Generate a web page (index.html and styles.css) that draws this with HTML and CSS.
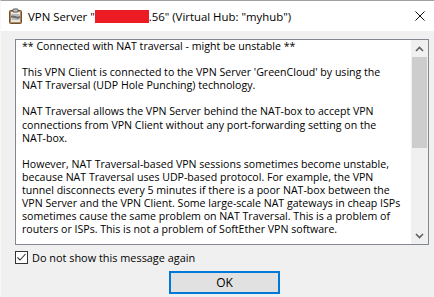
FILE: index.html
```html
<!DOCTYPE html>
<html>
<head>
<meta charset="utf-8">
<link rel="stylesheet" href="styles.css">
</head>
<body>
<div class="window">
  <div class="titlebar">
    <svg class="app-icon" width="16" height="16" viewBox="0 0 16 16">
      <rect x="1.5" y="2.5" width="12" height="13" rx="1" fill="#b08850" stroke="#6e5030"/>
      <rect x="3" y="4" width="9" height="10" fill="#e8e8e8"/>
      <path d="M3.5 7 L11.5 7 M3.5 9 L11.5 9 M3.5 11 L11.5 11" stroke="#8a8a8a" stroke-width="1"/>
      <path d="M3 8 C6 6.5 8 10 12 8 L12 10 C8 12 6 8.5 3 10 Z" fill="#6a6a6a"/>
      <rect x="5" y="1" width="5" height="3" rx="0.5" fill="#c8c8c8" stroke="#555"/>
    </svg>
    <span class="title">VPN Server "<span class="redact"></span>.56" (Virtual Hub: "myhub")</span>
    <svg class="close" width="10" height="10" viewBox="0 0 10 10">
      <path d="M0.5 0.5 L9.5 9.5 M9.5 0.5 L0.5 9.5" stroke="#111" stroke-width="1"/>
    </svg>
  </div>
  <div class="content">
    <div class="textbox">
      <div class="text">
        <p>** Connected with NAT traversal - might be unstable **</p>
        <p>This VPN Client is connected to the VPN Server 'GreenCloud' by using the<br>NAT Traversal (UDP Hole Punching) technology.</p>
        <p>NAT Traversal allows the VPN Server behind the NAT-box to accept VPN<br>connections from VPN Client without any port-forwarding setting on the<br>NAT-box.</p>
        <p>However, NAT Traversal-based VPN sessions sometimes become unstable,<br>because NAT Traversal uses UDP-based protocol. For example, the VPN<br>tunnel disconnects every 5 minutes if there is a poor NAT-box between the<br>VPN Server and the VPN Client. Some large-scale NAT gateways in cheap ISPs<br>sometimes cause the same problem on NAT Traversal. This is a problem of<br>routers or ISPs. This is not a problem of SoftEther VPN software.</p>
      </div>
      <div class="scrollbar">
        <div class="arrow">
          <svg width="9" height="6" viewBox="0 0 9 6"><path d="M1 5 L4.5 1.5 L8 5" fill="none" stroke="#606060" stroke-width="1.6"/></svg>
        </div>
        <div class="track">
          <div class="thumb"></div>
        </div>
        <div class="arrow">
          <svg width="9" height="6" viewBox="0 0 9 6"><path d="M1 1 L4.5 4.5 L8 1" fill="none" stroke="#606060" stroke-width="1.6"/></svg>
        </div>
      </div>
    </div>
    <label class="check-row">
      <span class="checkbox">
        <svg width="11" height="11" viewBox="0 0 11 11"><path d="M1.5 5.5 L4 8 L9.5 2" fill="none" stroke="#333" stroke-width="1.1"/></svg>
      </span>
      <span class="check-label">Do not show this message again</span>
    </label>
    <div class="button-row">
      <button class="ok">OK</button>
    </div>
  </div>
</div>
</body>
</html>
```
FILE: styles.css
```css
html, body {
  margin: 0;
  padding: 0;
}
body {
  width: 434px;
  height: 297px;
  overflow: hidden;
  font-family: "Open Sans", "Noto Sans", sans-serif;
}
.window {
  width: 434px;
  height: 297px;
  box-sizing: border-box;
  background: #f0f0f0;
  border-top: 1px solid #a0a0a0;
  border-left: 1px solid #f8f8f8;
  display: flex;
  flex-direction: column;
}
.titlebar {
  height: 30px;
  background: #ffffff;
  display: flex;
  align-items: center;
  padding-left: 7px;
  padding-right: 8px;
  flex-shrink: 0;
}
.app-icon {
  flex-shrink: 0;
}
.title {
  margin-left: 4px;
  font-size: 11.4px;
  color: #000;
  flex: 1;
  white-space: nowrap;
  display: flex;
  align-items: center;
}
.redact {
  display: inline-block;
  width: 54px;
  height: 13px;
  background: #ed1c24;
}
.close {
  flex-shrink: 0;
  margin-right: 1px;
}
.content {
  padding: 8px 4px 0 14px;
  display: flex;
  flex-direction: column;
}
.textbox {
  width: 414px;
  height: 206px;
  box-sizing: border-box;
  border: 1px solid #828790;
  background: #ffffff;
  display: flex;
}
.text {
  flex: 1;
  padding: 0 0 0 6px;
  font-size: 10.6px;
  line-height: 13.1px;
  color: #000;
  white-space: nowrap;
  overflow: hidden;
}
.text p {
  margin: 0 0 13.1px 0;
}
.scrollbar {
  width: 17px;
  background: #f0f0f0;
  display: flex;
  flex-direction: column;
}
.arrow {
  height: 17px;
  display: flex;
  align-items: center;
  justify-content: center;
}
.track {
  flex: 1;
  display: flex;
  flex-direction: column;
}
.thumb {
  height: 91px;
  margin: 0 1px;
  background: #cdcdcd;
}
.check-row {
  display: flex;
  align-items: center;
  margin-top: 5px;
  height: 14px;
}
.checkbox {
  width: 13px;
  height: 13px;
  box-sizing: border-box;
  border: 1px solid #333;
  background: #fff;
  display: flex;
  align-items: center;
  justify-content: center;
}
.check-label {
  margin-left: 4px;
  font-size: 10.9px;
  color: #000;
}
.button-row {
  display: flex;
  margin-top: 7px;
  padding-left: 154px;
}
.ok {
  width: 111px;
  height: 23px;
  box-sizing: border-box;
  border: 2px solid #0078d7;
  background: #e1e1e1;
  font-family: "Open Sans", "Noto Sans", sans-serif;
  font-size: 12px;
  color: #000;
  padding: 0;
}
```
